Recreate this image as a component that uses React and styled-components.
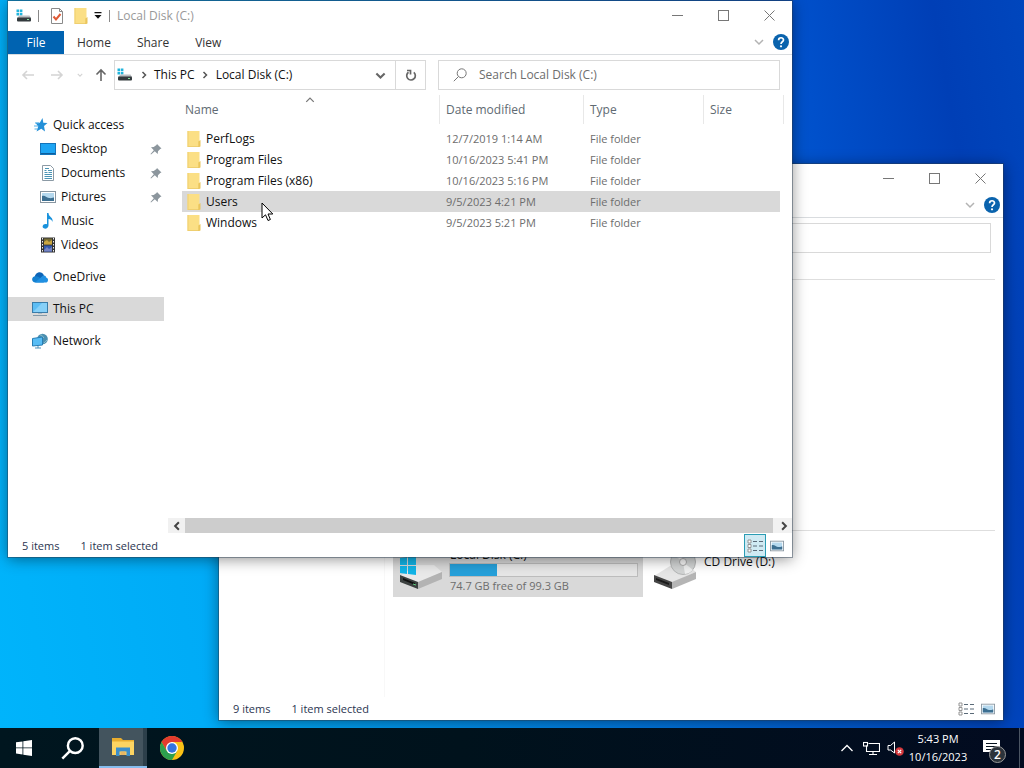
import React from "react";
import styled, { createGlobalStyle } from "styled-components";

const GlobalStyle = createGlobalStyle`
  * {
    box-sizing: border-box;
  }
  body {
    margin: 0;
    overflow: hidden;
    font-family: "Open Sans", "Noto Sans", sans-serif;
    font-size: 12px;
    line-height: 16px;
    color: #111;
  }
  button, input {
    font: inherit;
    color: inherit;
    margin: 0;
    padding: 0;
    border: none;
    background: transparent;
    outline: none;
  }
  svg {
    display: block;
    flex: none;
  }
`;

const Screen = styled.div`
  display: flex;
  flex-direction: column;
  height: 100vh;
`;

const Desktop = styled.main`
  position: relative;
  flex: 1;
  overflow: hidden;
  background: linear-gradient(
    80deg,
    #00b4fb 0%,
    #00aaf6 22%,
    #0080e4 50%,
    #0050cb 80%,
    #003fb6 92%,
    #0046bd 100%
  );
`;

const WindowFrame = styled.section`
  position: absolute;
  left: ${(props) => props.$x}px;
  top: ${(props) => props.$y}px;
  width: 784px;
  height: 556px;
  display: flex;
  flex-direction: column;
  background-color: #fff;
  box-shadow: 0 0 0 1px rgba(40, 60, 80, 0.45), 0 2px 14px rgba(0, 0, 0, 0.45);
`;

const TitleBar = styled.header`
  display: flex;
  align-items: flex-start;
  height: 30px;
  padding-left: 8px;
`;

const QuickTools = styled.div`
  display: flex;
  align-items: center;
  flex: 1;
  gap: 6px;
  height: 30px;
`;

const Separator = styled.span`
  width: 1px;
  height: 12px;
  background-color: #888;
`;

const Title = styled.h1`
  margin: 0 0 0 1px;
  font-size: 12px;
  font-weight: normal;
  color: #999;
`;

const ToolBtn = styled.button`
  display: flex;
  justify-content: center;
  align-items: center;
  width: ${(props) => props.$w || 16}px;
  height: 16px;
`;

const CaptionBtn = styled.button`
  display: flex;
  justify-content: center;
  align-items: center;
  width: 46px;
  height: 28px;
  color: #777;
`;

const Ribbon = styled.nav`
  display: flex;
  align-items: center;
  height: 24px;
  border-bottom: 1px solid #d9dcdf;
`;

const Tab = styled.button`
  height: 23px;
  padding: 0 13px;
  color: ${(props) => (props.$file ? "#fff" : "#333")};
  background-color: ${(props) => (props.$file ? "#0063b1" : "transparent")};
  ${(props) => props.$file && "width: 56px;"}
`;

const RibbonEnd = styled.div`
  display: flex;
  align-items: center;
  gap: 9px;
  margin-left: auto;
  padding: 0 3px 2px 0;
`;

const NavBar = styled.div`
  display: flex;
  align-items: center;
  height: 40px;
  padding: 0 12px 0 6px;
`;

const NavBtn = styled.button`
  display: flex;
  flex: none;
  justify-content: center;
  align-items: center;
  width: ${(props) => props.$w}px;
  height: 30px;
  color: ${(props) => (props.$on ? "#666" : "#d4d4d4")};
`;

const AddressBar = styled.div`
  display: flex;
  align-items: center;
  flex: 1 1 312px;
  height: 30px;
  border: 1px solid #d9d9d9;
  padding-left: 2px;
`;

const Crumb = styled.button`
  color: #111;
`;

const CrumbArrow = styled.span`
  display: flex;
  justify-content: center;
  width: 21px;
  color: #555;
`;

const DropBtn = styled.button`
  display: flex;
  justify-content: center;
  align-items: center;
  width: 30px;
  height: 28px;
  margin-left: ${(props) => (props.$push ? "auto" : "0")};
  border-left: ${(props) => (props.$push ? "none" : "1px solid #d9d9d9")};
  color: #666;
`;

const SearchBox = styled.label`
  display: flex;
  align-items: center;
  flex: 1 1 342px;
  gap: 12px;
  height: 30px;
  margin-left: 12px;
  padding-left: 14px;
  border: 1px solid #d9d9d9;
  color: #777;
  input {
    flex: 1;
    min-width: 0;
  }
  input::placeholder {
    color: #6d6d6d;
    opacity: 1;
  }
`;

const Body = styled.div`
  display: flex;
  flex: 1;
  min-height: 0;
`;

const Tree = styled.ul`
  list-style: none;
  width: 156px;
  margin: 0;
  padding: 18px 0 0;
`;

const TreeItem = styled.li`
  margin-bottom: ${(props) => (props.$last ? 8 : 0)}px;
`;

const TreeBtn = styled.button`
  display: flex;
  align-items: center;
  gap: 5px;
  width: 100%;
  height: 24px;
  padding-left: ${(props) => (props.$nested ? 32 : 24)}px;
  padding-right: 1px;
  background-color: ${(props) => (props.$selected ? "#d9d9d9" : "transparent")};
  svg:nth-of-type(2) {
    margin-left: auto;
  }
`;

const ListPane = styled.div`
  display: flex;
  flex-direction: column;
  flex: 1;
  margin-left: 4px;
`;

const Files = styled.table`
  table-layout: fixed;
  width: 602px;
  margin-left: 14px;
  border-spacing: 0;
  th,
  td {
    padding: 0;
    text-align: left;
    font-weight: normal;
    white-space: nowrap;
  }
`;

const Heading = styled.th`
  height: 33px;
  vertical-align: top;
  color: #606a72;
`;

const HeadingLabel = styled.span`
  position: relative;
  display: block;
  height: 29px;
  line-height: 29px;
  padding-left: ${(props) => (props.$first ? 3 : 6)}px;
  border-right: 1px solid #e8e8e8;
`;

const SortMark = styled.span`
  position: absolute;
  top: 0;
  left: 123px;
  color: #777;
`;

const Row = styled.tr`
  height: 21px;
  font-size: 11px;
  color: #6d6d6d;
  && td {
    padding-left: 6px;
    background-color: ${(props) => (props.$selected ? "#d9d9d9" : "#fff")};
  }
  && td:first-child {
    padding-left: 5px;
    font-size: 12px;
    color: #111;
  }
  td:last-child {
    border-right: 4px solid #fff;
  }
`;

const FileName = styled.span`
  display: flex;
  align-items: center;
  gap: 5px;
`;

const ScrollBar = styled.div`
  display: flex;
  align-items: center;
  height: 15px;
  margin-top: auto;
  margin-bottom: 1px;
  background-color: #f1f1f1;
`;

const ScrollBtn = styled.button`
  display: flex;
  justify-content: center;
  align-items: center;
  width: 17px;
  height: 15px;
  color: #444;
`;

const ScrollThumb = styled.div`
  flex: 1;
  height: 15px;
  margin-right: 2px;
  background-color: #cdcdcd;
`;

const StatusBar = styled.footer`
  display: flex;
  align-items: center;
  height: 23px;
  padding: 0 4px 0 14px;
  gap: 21px;
  font-size: 11px;
  color: #2b3550;
`;

const ViewSwitch = styled.div`
  display: flex;
  margin-left: auto;
`;

const ViewBtn = styled.button`
  display: flex;
  justify-content: center;
  align-items: center;
  width: 22px;
  height: 23px;
  border: 1px solid ${(props) => (props.$active ? "#2a9cb4" : "transparent")};
  background-color: ${(props) => (props.$active ? "#cfeaf3" : "transparent")};
`;

const DriveBody = styled(Body)`
  margin-top: 21px;
  margin-right: 8px;
  border-top: 1px solid #dedede;
`;

const EmptyTree = styled.div`
  width: 166px;
  border-right: 1px solid #f8f8f8;
`;

const DrivePane = styled.div`
  flex: 1;
  padding-top: 250px;
`;

const Tiles = styled.div`
  display: flex;
  gap: 4px;
  padding: 12px 0 0 8px;
  border-top: 1px solid #dedede;
`;

const Tile = styled.button`
  display: flex;
  align-items: center;
  gap: 7px;
  width: 250px;
  height: 54px;
  padding: 0 5px 0 6px;
  text-align: left;
  background-color: ${(props) => (props.$selected ? "#d9d9d9" : "transparent")};
`;

const TileText = styled.span`
  display: flex;
  flex-direction: column;
  flex: 1;
  min-height: 32px;
  padding-left: ${(props) => (props.$plain ? 1 : 0)}px;
`;

const Capacity = styled.progress`
  appearance: none;
  display: block;
  width: 100%;
  height: 14px;
  border: 1px solid #bcbcbc;
  &::-webkit-progress-bar {
    background-color: #e6e6e6;
  }
  &::-webkit-progress-value {
    background-color: #26a0da;
  }
`;

const TileLine = styled.span`
  padding-left: 1px;
`;

const FreeSpace = styled(TileLine)`
  padding-top: 1px;
  font-size: 11px;
  color: #6d6d6d;
`;

const Pointer = styled.svg`
  position: absolute;
  left: 261px;
  top: 202px;
`;

const Taskbar = styled.footer`
  display: flex;
  height: 40px;
  color: #fff;
  background: linear-gradient(90deg, #00161f, #00121c 45%, #020b20);
`;

const TaskBtn = styled.button`
  display: flex;
  justify-content: center;
  align-items: center;
  width: ${(props) => props.$w || 48}px;
  height: 40px;
  background-color: ${(props) => (props.$active ? "#43545e" : "transparent")};
  border-bottom: ${(props) => (props.$active ? "2px solid #86bdee" : "none")};
  ${(props) => props.$active && "box-shadow: inset -4px 0 0 #2c3f4a;"}
`;

const SearchBtn = styled(TaskBtn)`
  padding-right: 3px;
`;

const Tray = styled.div`
  display: flex;
  align-items: center;
  margin-left: auto;
  padding-right: 4px;
`;

const Clock = styled.button`
  width: 62px;
  font-size: 11px;
  line-height: 18px;
  text-align: center;
`;

const Bell = styled(TaskBtn)`
  position: relative;
  margin-right: 6px;
`;

const Count = styled.span`
  position: absolute;
  left: 20px;
  top: 18px;
  width: 17px;
  height: 17px;
  border-radius: 50%;
  border: 1px solid #999;
  background-color: #2c333b;
  font-weight: 600;
  line-height: 15px;
  text-align: center;
`;

const Edge = styled.span`
  width: 1px;
  height: 40px;
  background-color: #4b5563;
`;

const Chevron = ({ dir = "down", size = 8, width = 1.5 }) => {
  const paths = {
    down: "M1 2.5L4 5.5L7 2.5",
    up: "M1 5.5L4 2.5L7 5.5",
    right: "M2.5 1L5.5 4L2.5 7",
    left: "M5.5 1L2.5 4L5.5 7",
  };
  return (
    <svg width={size} height={size} viewBox="0 0 8 8" fill="none" stroke="currentColor" strokeWidth={width}>
      <path d={paths[dir]} />
    </svg>
  );
};

const Caret = () => (
  <svg width="8" height="8" viewBox="0 0 8 8" fill="#111">
    <path d="M0.500 0h7v1.200h-7zM0.500 3h7L4 6.700z" />
  </svg>
);

const DiskIcon = () => (
  <svg width="16" height="16" viewBox="0 0 16 16">
    <path d="M0.500 1.500h2.600v2.600H0.500zM3.800 1.500h2.600v2.600H3.800zM0.500 4.800h2.600v2.600H0.500zM3.800 4.800h2.600v2.600H3.800z" fill="#20b4dc" />
    <path d="M3.500 7.500h10L15 10H1z" fill="#b9bdc0" />
    <rect x="1" y="9.500" width="14" height="4" rx="1" fill="#333a3d" />
    <rect x="11" y="11" width="2" height="1" fill="#8be0a0" />
  </svg>
);

const CheckIcon = () => (
  <svg width="14" height="16" viewBox="0 0 14 16">
    <path d="M1.500 0.500h8l3 3v12h-11z" fill="#fff" stroke="#8a8a8a" />
    <path d="M9.500 0.500v3h3" fill="none" stroke="#8a8a8a" />
    <path d="M3.500 8.500l2.500 3L10.500 6" fill="none" stroke="#df5a36" strokeWidth="2" />
  </svg>
);

const FolderIcon = () => (
  <svg width="14" height="16" viewBox="0 0 14 16">
    <path d="M0.500 0h12v16h-12z" fill="#fbdf85" />
    <path d="M0.500 0h1v16h-1zM0.500 15h12v1h-12z" fill="#efcf70" />
    <path d="M11.300 10.500l2.200-1.500v6.500l-2.200 0.500z" fill="#eac55c" />
  </svg>
);

const HelpIcon = () => (
  <svg width="16" height="16" viewBox="0 0 16 16">
    <circle cx="8" cy="8" r="8" fill="#0a63ad" />
    <path d="M5.600 6.200C5.600 3 10.500 3 10.500 6C10.500 7.800 8 7.800 8 10" fill="none" stroke="#fff" strokeWidth="1.700" />
    <circle cx="8" cy="12.300" r="1.100" fill="#fff" />
  </svg>
);

const ArrowIcon = ({ d }) => (
  <svg width="14" height="14" viewBox="0 0 14 14" fill="none" stroke="currentColor" strokeWidth="1.600">
    <path d={d} />
  </svg>
);

const RefreshIcon = () => (
  <svg width="12" height="13" viewBox="0 0 12 13" fill="none" stroke="currentColor" strokeWidth="1.700">
    <path d="M3.500 3.200A4.300 4.300 0 1 0 8.800 3.400" />
    <path d="M2 1.500h3.500v4" />
  </svg>
);

const GlassIcon = ({ size = 14, width = 1 }) => (
  <svg width={size} height={size} viewBox="0 0 14 14" fill="none" stroke="currentColor" strokeWidth={width}>
    <circle cx="8.700" cy="5.300" r="4.500" />
    <path d="M5.500 8.500L0.800 13.200" />
  </svg>
);

const StarIcon = () => (
  <svg width="16" height="16" viewBox="0 0 16 16">
    <path d="M10.500 1l.8 4.800 4.200.2-3.500 3 1 5.500-3.700-2.700-4.800 2.700 1.700-5L3.500 5.800h4.300z" fill="#2490d8" />
    <path d="M3 6h4M2 9h4.500M2.500 12h3" stroke="#55b1e8" />
  </svg>
);

const ScreenIcon = () => (
  <svg width="16" height="16" viewBox="0 0 16 16">
    <rect x="0.500" y="2.500" width="15" height="11" fill="#1ea5f3" stroke="#1474ba" />
    <path d="M1 12.500h14" stroke="#0d5e9c" />
  </svg>
);

const DocIcon = () => (
  <svg width="16" height="16" viewBox="0 0 16 16">
    <path d="M2.500 0.500h8l3 3v12h-11z" fill="#fff" stroke="#8c9aa5" />
    <path d="M4.500 5.500h2M8 5.500h4M4.500 7.500h3M8.500 7.500h3.500M4.500 9.500h7.500M4.500 11.500h7.500M4.500 13.500h7.500M5 3.500h4" stroke="#4a94b5" />
  </svg>
);

const PictureIcon = ({ size = 16 }) => (
  <svg width={size} height={size} viewBox="0 0 16 16">
    <rect x="0.500" y="2.500" width="15" height="11" fill="#fff" stroke="#8795a0" />
    <rect x="2" y="4" width="12" height="8" fill="#b4d8ee" />
    <path d="M2 7c3-1 4 1.500 7 2s4-.5 5-.5V12H2z" fill="#3c6f91" />
  </svg>
);

const MusicIcon = () => (
  <svg width="16" height="16" viewBox="0 0 16 16">
    <path d="M7 0h1.500c0 4 5 4 4 9-.5-2-2-3-4-3v6.500C8.500 15 6 16 4.300 15.500 1.500 14.500 2.500 11 5.500 11c.6 0 1 0 1.500.2z" fill="#1992dc" />
  </svg>
);

const VideoIcon = () => (
  <svg width="16" height="16" viewBox="0 0 16 16">
    <rect x="1" y="0.500" width="14" height="15" fill="#333" />
    <path d="M2.500 1v14M13.500 1v14" stroke="#eee" strokeDasharray="1.500 1.500" />
    <rect x="4" y="1.500" width="8" height="6" fill="#776d35" />
    <path d="M4 5l3-2 2 2 3-2v4.500H4z" fill="#c9a641" />
    <rect x="4" y="8.500" width="8" height="6" fill="#3259ad" />
    <path d="M4 13l3-3 2 2 3-2v4.500H4z" fill="#7584c5" />
  </svg>
);

const CloudIcon = () => (
  <svg width="16" height="16" viewBox="0 0 16 16">
    <path d="M2.500 9C3 3 9.500 1 12 6.500l-5 5z" fill="#0d65b8" />
    <path d="M3.500 13.500C-1 13.500-1 7.500 3.500 7.300 6 7 7 8.500 9 9.500l3 4z" fill="#1480d0" />
    <path d="M3 13.500l7-6c2-1.800 4-.8 4 .9 3 .5 2.500 5.100-.5 5.100z" fill="#2090e2" />
  </svg>
);

const PcIcon = () => (
  <svg width="16" height="16" viewBox="0 0 16 16">
    <rect x="0.500" y="1.500" width="15" height="10" fill="#5cbdf4" stroke="#3a7ca9" />
    <path d="M1 11L10 2h5v9z" fill="#86d0f8" />
    <path d="M1 14.500h14" stroke="#8399a8" />
    <path d="M6 12.500h4" stroke="#aebcc5" />
  </svg>
);

const NetworkIcon = () => (
  <svg width="16" height="16" viewBox="0 0 16 16">
    <circle cx="10.500" cy="6" r="5.300" fill="#4b8fb0" />
    <path d="M8 2c3-1 1 2.500 4 2.500M12 10c1-2 2-1 3-3" stroke="#93c4cf" fill="none" />
    <path d="M0.500 5.500L10.500 4v8l-10 1z" fill="#58bdf5" stroke="#277eb5" />
    <path d="M3 15h6M6 13v2" stroke="#4c91ba" />
  </svg>
);

const PinIcon = () => (
  <svg width="14" height="14" viewBox="0 0 14 14">
    <path d="M8 2l4.500 4.500-1.300.4-2.200 2.400-.3 2.700L5.800 9.200 2 12.500 1.500 12 4.800 8.200 2 5.300l2.700-.3L7.500 3z" fill="#8c969d" />
  </svg>
);

const DetailsIcon = () => (
  <svg width="17" height="14" viewBox="0 0 17 14" fill="none">
    <path d="M1 1h3v3H1zM1 5.500h3v3H1zM1 10h3v3H1z" fill="#fff" stroke="#8a8a8a" strokeWidth="0.900" />
    <path d="M6 2.500h4M12 2.500h4M6 7h4M12 7h4M6 11.500h4M12 11.500h4" stroke="#5a6a78" />
  </svg>
);

const LocalDrive = () => (
  <svg width="43" height="44" viewBox="0 0 43 44">
    <path d="M1 28L17 17h18l8 7-24 11z" fill="#e9e9e9" />
    <path d="M1 27l18 7v7L1 34z" fill="#3c4140" />
    <path d="M19 34l24-10v7L19 41z" fill="#b3b3b3" />
    <path d="M4 30l12 5v2L4 32z" fill="#111" />
    <path d="M14 36l3 1" stroke="#62cf80" />
    <path d="M1 10l7-1v8H1zM9 9l8-1v9H9zM1 18h7v8l-7-1zM9 18h8v9l-8-1z" fill="#12b5e8" />
  </svg>
);

const CdDrive = () => (
  <svg width="43" height="44" viewBox="0 0 43 44">
    <path d="M1 28L17 18h18l8 6-24 11z" fill="#e6e6e6" />
    <path d="M1 27l18 7v7L1 34z" fill="#454545" />
    <path d="M19 34l24-10v7L19 41z" fill="#b5b5b5" />
    <path d="M3 30l13 5v2L3 32z" fill="#1a1a1a" />
    <circle cx="30" cy="14" r="12.500" fill="#d3d5d5" stroke="#b4b6b6" />
    <path d="M30 14L20 6a13 13 0 0 1 8-4zM30 14l10 8a13 13 0 0 1-8 4z" fill="#f0f1f1" />
    <circle cx="30" cy="14" r="3.500" fill="#f7f7f7" stroke="#aaa" />
  </svg>
);

const TREE = [
  { label: "Quick access", icon: <StarIcon /> },
  { label: "Desktop", icon: <ScreenIcon />, nested: true, pinned: true },
  { label: "Documents", icon: <DocIcon />, nested: true, pinned: true },
  { label: "Pictures", icon: <PictureIcon />, nested: true, pinned: true },
  { label: "Music", icon: <MusicIcon />, nested: true },
  { label: "Videos", icon: <VideoIcon />, nested: true, last: true },
  { label: "OneDrive", icon: <CloudIcon />, last: true },
  { label: "This PC", icon: <PcIcon />, selected: true, last: true },
  { label: "Network", icon: <NetworkIcon /> },
];

const FILES = [
  { name: "PerfLogs", date: "12/7/2019 1:14 AM" },
  { name: "Program Files", date: "10/16/2023 5:41 PM" },
  { name: "Program Files (x86)", date: "10/16/2023 5:16 PM" },
  { name: "Users", date: "9/5/2023 4:21 PM", selected: true },
  { name: "Windows", date: "9/5/2023 5:21 PM" },
];

const Captions = () => (
  <>
    <CaptionBtn aria-label="Minimize">
      <svg width="11" height="11" stroke="currentColor">
        <path d="M0 5.500h11" />
      </svg>
    </CaptionBtn>
    <CaptionBtn aria-label="Maximize">
      <svg width="11" height="11" fill="none" stroke="currentColor">
        <rect x="0.500" y="0.500" width="10" height="10" />
      </svg>
    </CaptionBtn>
    <CaptionBtn aria-label="Close">
      <svg width="11" height="11" stroke="currentColor">
        <path d="M0.500 0.500l10 10M10.500 0.500l-10 10" />
      </svg>
    </CaptionBtn>
  </>
);

const RibbonTools = () => (
  <RibbonEnd>
    <ToolBtn $w={10} aria-label="Expand ribbon">
      <svg width="10" height="8" viewBox="0 0 10 8" fill="none" stroke="#b3b3b3" strokeWidth="1.500">
        <path d="M1 2l4 4 4-4" />
      </svg>
    </ToolBtn>
    <ToolBtn aria-label="Help">
      <HelpIcon />
    </ToolBtn>
  </RibbonEnd>
);

const Status = ({ count, details }) => (
  <StatusBar>
    <span>{count} items</span>
    <span>1 item selected</span>
    <ViewSwitch>
      <ViewBtn $active={details} aria-label="Details view">
        <DetailsIcon />
      </ViewBtn>
      <ViewBtn aria-label="Thumbnail view">
        <PictureIcon size={14} />
      </ViewBtn>
    </ViewSwitch>
  </StatusBar>
);

const ThisPcWindow = () => (
  <WindowFrame $x={219} $y={164}>
    <TitleBar>
      <QuickTools />
      <Captions />
    </TitleBar>
    <Ribbon>
      <RibbonTools />
    </Ribbon>
    <NavBar>
      <AddressBar />
      <SearchBox>
        <input type="search" aria-label="Search" />
      </SearchBox>
    </NavBar>
    <DriveBody>
      <EmptyTree />
      <DrivePane>
        <Tiles>
          <Tile $selected>
            <LocalDrive />
            <TileText>
              <TileLine>Local Disk (C:)</TileLine>
              <Capacity value={25} max={99} aria-label="Used space" />
              <FreeSpace>74.7 GB free of 99.3 GB</FreeSpace>
            </TileText>
          </Tile>
          <Tile>
            <CdDrive />
            <TileText $plain>CD Drive (D:)</TileText>
          </Tile>
        </Tiles>
      </DrivePane>
    </DriveBody>
    <Status count={9} />
  </WindowFrame>
);

const LocalDiskWindow = () => (
  <WindowFrame $x={8} $y={1}>
    <TitleBar>
      <QuickTools>
        <DiskIcon />
        <Separator />
        <ToolBtn $w={24} aria-label="Properties">
          <CheckIcon />
        </ToolBtn>
        <ToolBtn $w={12} aria-label="New folder">
          <FolderIcon />
        </ToolBtn>
        <ToolBtn $w={10} aria-label="Customize toolbar">
          <Caret />
        </ToolBtn>
        <Separator />
        <Title>Local Disk (C:)</Title>
      </QuickTools>
      <Captions />
    </TitleBar>
    <Ribbon>
      <Tab $file>File</Tab>
      <Tab>Home</Tab>
      <Tab>Share</Tab>
      <Tab>View</Tab>
      <RibbonTools />
    </Ribbon>
    <NavBar>
      <NavBtn $w={28} aria-label="Back">
        <ArrowIcon d="M13 7H2M6 3L2 7l4 4" />
      </NavBtn>
      <NavBtn $w={30} aria-label="Forward">
        <ArrowIcon d="M1 7h11M8 3l4 4-4 4" />
      </NavBtn>
      <NavBtn $w={16} aria-label="Recent locations">
        <Chevron size={6} />
      </NavBtn>
      <NavBtn $w={26} $on aria-label="Up">
        <ArrowIcon d="M7 13V2M2.500 6.500L7 2l4.500 4.500" />
      </NavBtn>
      <AddressBar>
        <DiskIcon />
        <CrumbArrow>
          <Chevron dir="right" />
        </CrumbArrow>
        <Crumb>This PC</Crumb>
        <CrumbArrow>
          <Chevron dir="right" />
        </CrumbArrow>
        <Crumb>Local Disk (C:)</Crumb>
        <DropBtn $push aria-label="Previous locations">
          <Chevron size={11} />
        </DropBtn>
        <DropBtn aria-label="Refresh">
          <RefreshIcon />
        </DropBtn>
      </AddressBar>
      <SearchBox>
        <GlassIcon />
        <input type="search" placeholder="Search Local Disk (C:)" aria-label="Search Local Disk (C:)" />
      </SearchBox>
    </NavBar>
    <Body>
      <Tree>
        {TREE.map((item) => (
          <TreeItem key={item.label} $last={item.last}>
            <TreeBtn $nested={item.nested} $selected={item.selected}>
              {item.icon}
              {item.label}
              {item.pinned && <PinIcon />}
            </TreeBtn>
          </TreeItem>
        ))}
      </Tree>
      <ListPane>
        <Files>
          <colgroup>
            <col width="258" />
            <col width="144" />
            <col width="120" />
            <col width="80" />
          </colgroup>
          <thead>
            <tr>
              <Heading>
                <HeadingLabel $first>
                  Name
                  <SortMark>
                    <Chevron dir="up" size={10} width={1} />
                  </SortMark>
                </HeadingLabel>
              </Heading>
              <Heading>
                <HeadingLabel>Date modified</HeadingLabel>
              </Heading>
              <Heading>
                <HeadingLabel>Type</HeadingLabel>
              </Heading>
              <Heading>
                <HeadingLabel>Size</HeadingLabel>
              </Heading>
            </tr>
          </thead>
          <tbody>
            {FILES.map((file) => (
              <Row key={file.name} $selected={file.selected}>
                <td>
                  <FileName>
                    <FolderIcon />
                    {file.name}
                  </FileName>
                </td>
                <td>{file.date}</td>
                <td>File folder</td>
                <td />
              </Row>
            ))}
          </tbody>
        </Files>
        <ScrollBar>
          <ScrollBtn aria-label="Scroll left">
            <Chevron dir="left" size={10} width={1.6} />
          </ScrollBtn>
          <ScrollThumb />
          <ScrollBtn aria-label="Scroll right">
            <Chevron dir="right" size={10} width={1.6} />
          </ScrollBtn>
        </ScrollBar>
      </ListPane>
    </Body>
    <Status count={5} details />
  </WindowFrame>
);

const App = () => {
  return (
    <Screen>
      <GlobalStyle />
      <Desktop>
        <ThisPcWindow />
        <LocalDiskWindow />
        <Pointer width="13" height="20" viewBox="0 0 13 20">
          <path d="M1 1v15l3.500-3.200L7 18.500l2.400-1L7 12h4.800z" fill="#fff" stroke="#000" />
        </Pointer>
      </Desktop>
      <Taskbar>
        <TaskBtn aria-label="Start">
          <svg width="16" height="16" viewBox="0 0 16 16" fill="#fff">
            <path d="M0 2.300L6.500 1.400V7.500H0zM7.300 1.300L16 0v7.500H7.300zM0 8.300h6.500v6.200L0 13.600zM7.300 8.300H16V16l-8.700-1.300z" />
          </svg>
        </TaskBtn>
        <SearchBtn $w={51} aria-label="Search">
          <GlassIcon size={23} width={1.5} />
        </SearchBtn>
        <TaskBtn $active aria-label="File Explorer">
          <svg width="22" height="18" viewBox="0 0 22 18">
            <path d="M0 0h9l2 2h11v15H0z" fill="#e8ad2f" />
            <path d="M0 3.500h22V17H0z" fill="#fcd462" />
            <path d="M4 18V9.500h14V18h-3.500v-4.500h-7V18z" fill="#3b8ecb" />
            <path d="M8.500 13.500h5V17h-5z" fill="#e8b765" />
          </svg>
        </TaskBtn>
        <TaskBtn $w={50} aria-label="Google Chrome">
          <svg width="24" height="24" viewBox="0 0 24 24">
            <circle cx="12" cy="12" r="12" fill="#fbc116" />
            <path d="M1.600 6A12 12 0 0 1 22.400 6H12L6.800 15z" fill="#e33b2e" />
            <path d="M1.600 6A12 12 0 0 0 12 24l5.200-9L12 17.500 6.800 15z" fill="#2da04e" />
            <circle cx="12" cy="12" r="6" fill="#fff" />
            <circle cx="12" cy="12" r="4.700" fill="#3474e0" />
          </svg>
        </TaskBtn>
        <Tray>
          <TaskBtn $w={24} aria-label="Show hidden icons">
            <svg width="12" height="8" viewBox="0 0 12 8" fill="none" stroke="#fff" strokeWidth="1.300">
              <path d="M0.500 7L6 1.500 11.500 7" />
            </svg>
          </TaskBtn>
          <TaskBtn $w={24} aria-label="Network">
            <svg width="17" height="15" viewBox="0 0 17 15" fill="none" stroke="#fff" strokeWidth="1.100">
              <path d="M5.500 2.500h11v8H3.500V6.500M10 10.500v3M6 13.500h8M3.500 6.500v-2" />
              <rect x="0.500" y="1.500" width="4" height="3.500" />
            </svg>
          </TaskBtn>
          <TaskBtn $w={24} aria-label="Volume muted">
            <svg width="17" height="15" viewBox="0 0 17 15">
              <path d="M1 4.500h2.500L7.500 1v11L3.500 9H1z" fill="none" stroke="#fff" />
              <circle cx="12.500" cy="10.500" r="4.300" fill="#d3373b" />
              <path d="M10.800 8.800l3.400 3.400M14.200 8.800l-3.400 3.400" stroke="#fff" strokeWidth="1.200" />
            </svg>
          </TaskBtn>
          <Clock>
            5:43 PM
            <br />
            10/16/2023
          </Clock>
          <Bell $w={44} aria-label="Notifications">
            <svg width="17" height="16" viewBox="0 0 17 16">
              <path d="M0 0h17v12h-5l-4 4v-4H0z" fill="#fff" />
              <path d="M3 3.500h11M3 6.500h11M3 9.500h6" stroke="#07131f" />
            </svg>
            <Count>2</Count>
          </Bell>
          <Edge />
        </Tray>
      </Taskbar>
    </Screen>
  );
};

export default App;
